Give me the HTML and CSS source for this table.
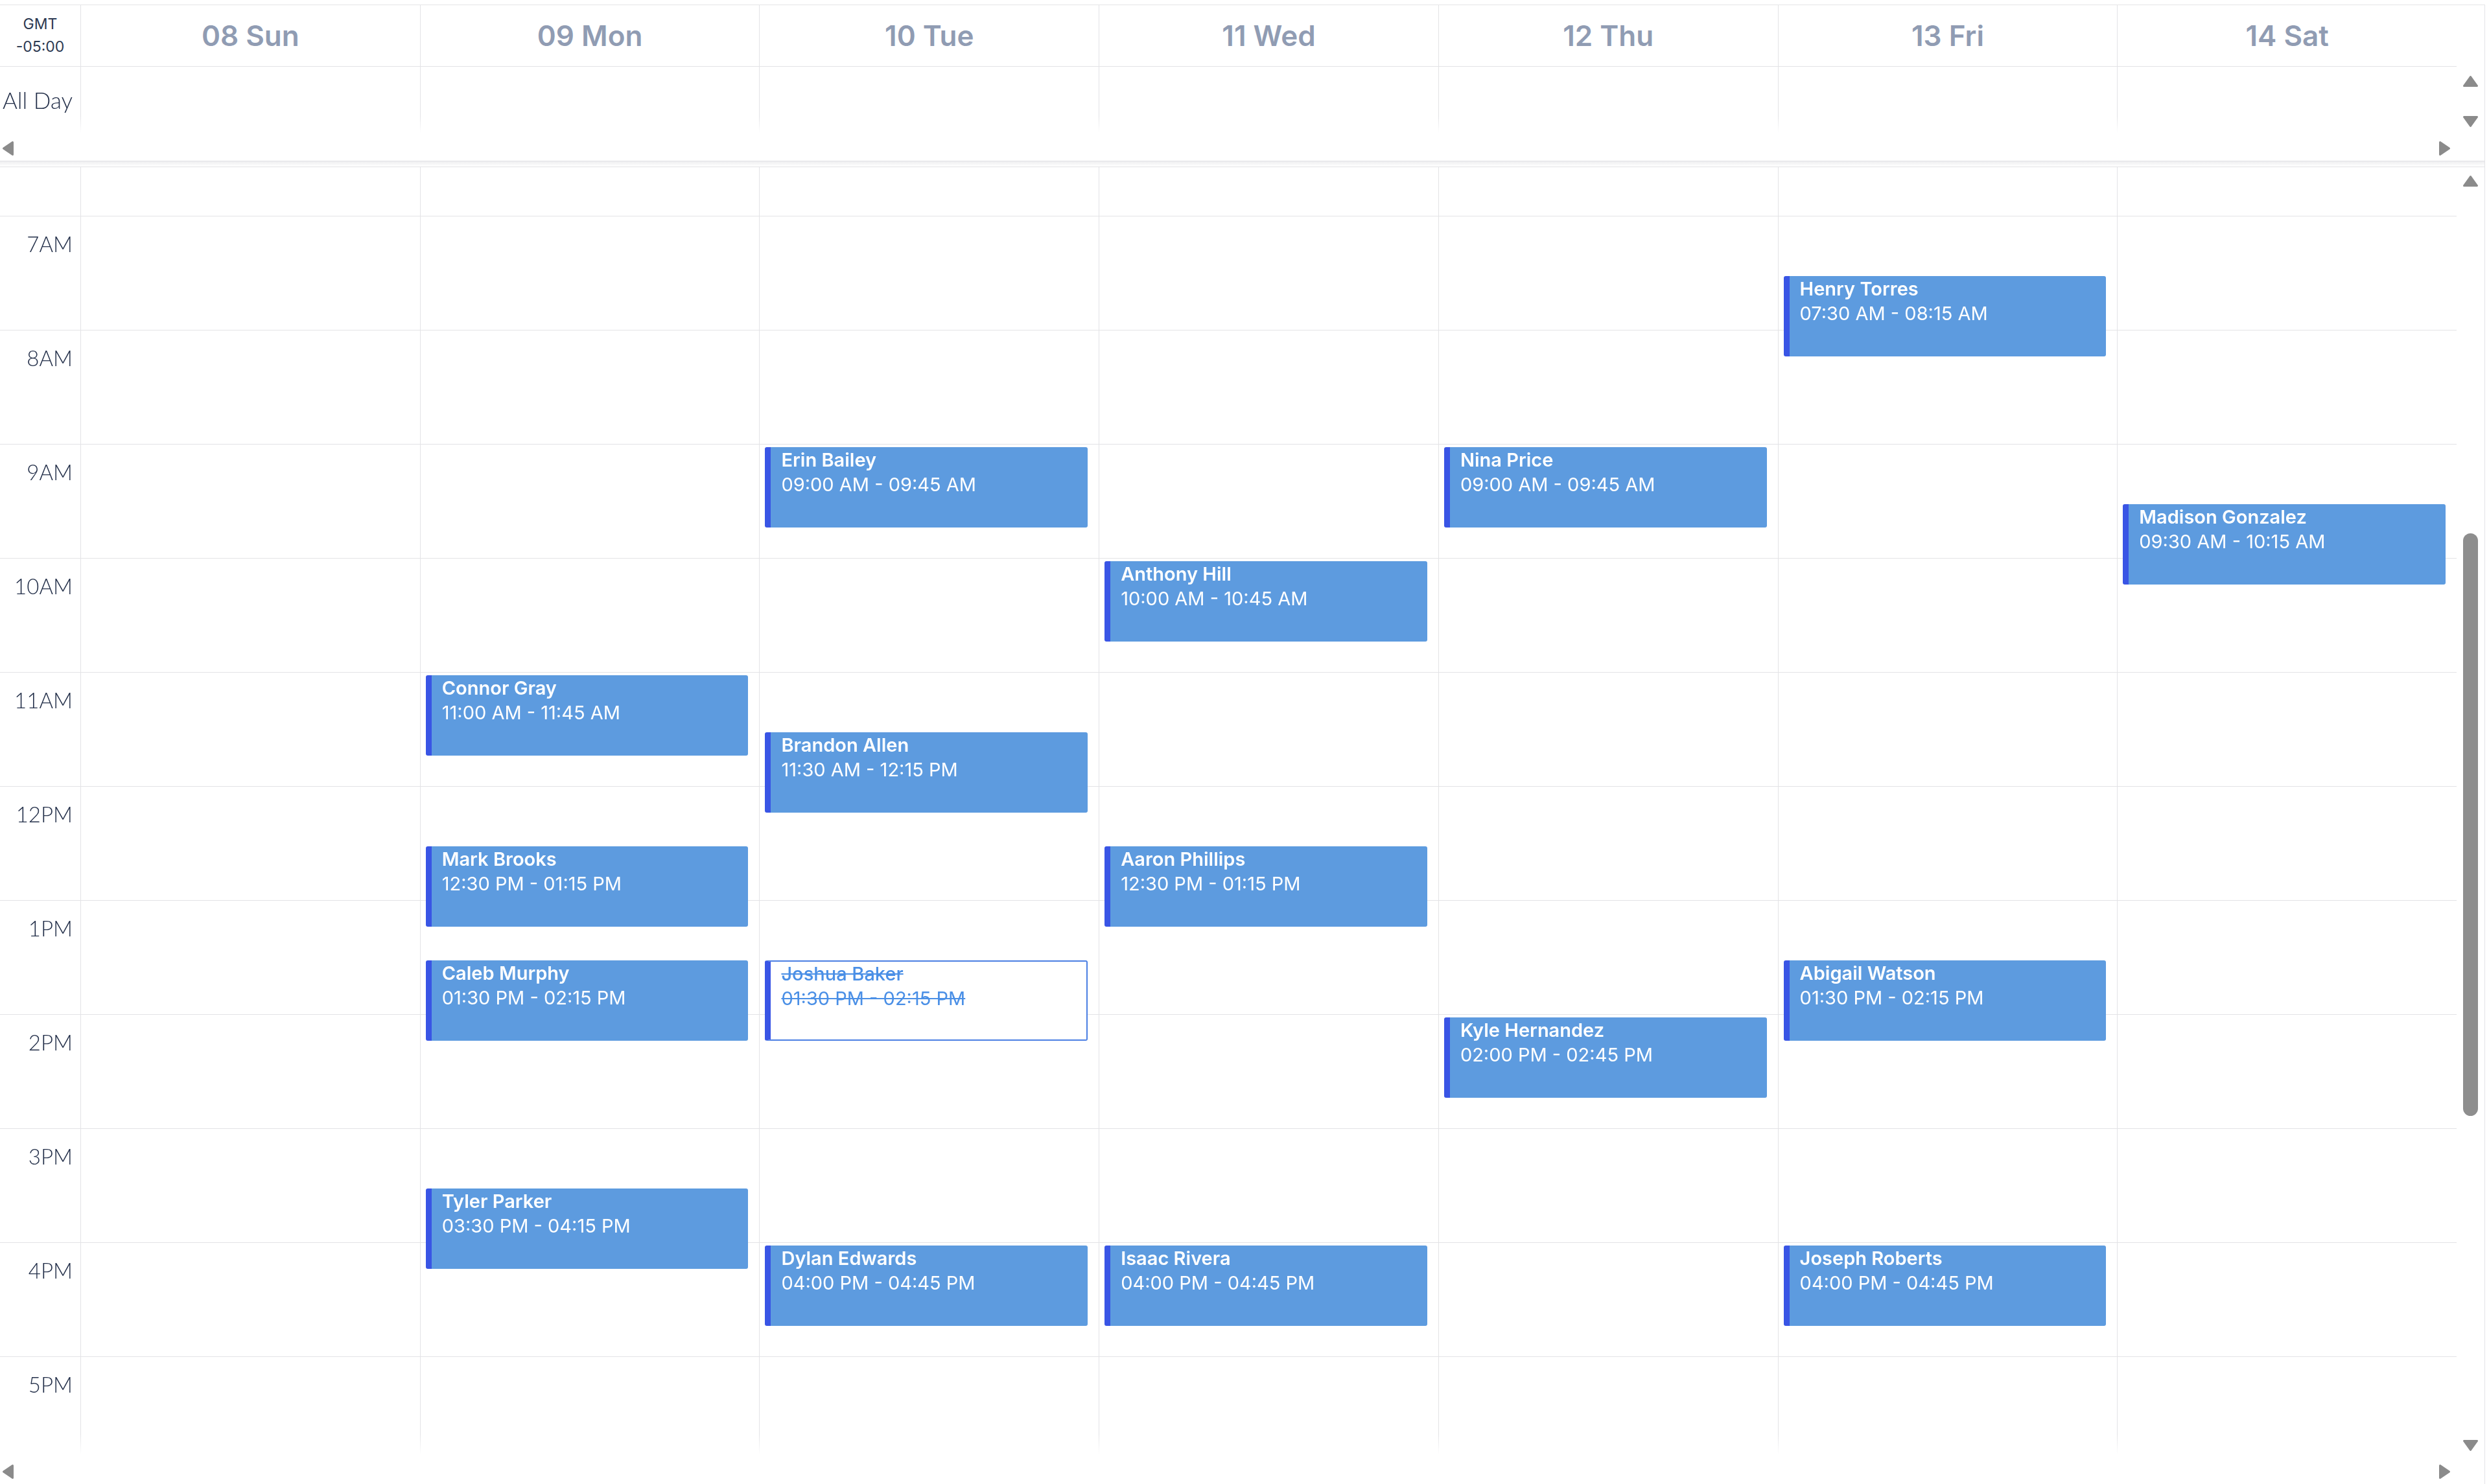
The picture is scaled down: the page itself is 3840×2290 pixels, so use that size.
FILE: index.html
```html
<!DOCTYPE html>
<html lang="en">
<head>
<meta charset="utf-8">
<title>Week Schedule</title>
<link rel="stylesheet" href="styles.css">
</head>
<body>
<div class="scheduler">
  <div class="header">
    <div class="tz"><span>GMT</span><span>-05:00</span></div>
    <div class="day-head">08 Sun</div>
    <div class="day-head">09 Mon</div>
    <div class="day-head">10 Tue</div>
    <div class="day-head">11 Wed</div>
    <div class="day-head">12 Thu</div>
    <div class="day-head">13 Fri</div>
    <div class="day-head">14 Sat</div>
    <div class="gutter"></div>
  </div>

  <div class="allday">
    <div class="allday-main">
      <div class="allday-cells">
        <div class="allday-label">All Day</div>
        <div class="allday-cell"></div>
        <div class="allday-cell"></div>
        <div class="allday-cell"></div>
        <div class="allday-cell"></div>
        <div class="allday-cell"></div>
        <div class="allday-cell"></div>
        <div class="allday-cell"></div>
      </div>
      <div class="hbar hbar-allday">
        <svg class="arr arr-h" viewBox="0 0 19 24"><path d="M2.5 12 L16.5 2.5 L16.5 21.5 Z"/></svg>
        <svg class="arr arr-h" viewBox="0 0 19 24"><path d="M16.5 12 L2.5 2.5 L2.5 21.5 Z"/></svg>
      </div>
    </div>
    <div class="vbar vbar-allday">
      <svg class="arr arr-v" viewBox="0 0 25 19"><path d="M12.5 2.5 L22.5 16.5 L2.5 16.5 Z"/></svg>
      <svg class="arr arr-v" viewBox="0 0 25 19"><path d="M12.5 16.5 L22.5 2.5 L2.5 2.5 Z"/></svg>
    </div>
  </div>

  <div class="sep"></div>

  <div class="body">
    <div class="body-left">
      <div class="viewport">
        <div class="grid">
          <div class="times">
            <div class="time"></div>
            <div class="time">7AM</div>
            <div class="time">8AM</div>
            <div class="time">9AM</div>
            <div class="time">10AM</div>
            <div class="time">11AM</div>
            <div class="time">12PM</div>
            <div class="time">1PM</div>
            <div class="time">2PM</div>
            <div class="time">3PM</div>
            <div class="time">4PM</div>
            <div class="time">5PM</div>
          </div>
          <div class="day-col"></div>
          <div class="day-col">
            <div class="event" style="top:885px"><span class="ev-name">Connor Gray</span><span class="ev-time">11:00 AM - 11:45 AM</span></div>
            <div class="event" style="top:1149px"><span class="ev-name">Mark Brooks</span><span class="ev-time">12:30 PM - 01:15 PM</span></div>
            <div class="event" style="top:1325px"><span class="ev-name">Caleb Murphy</span><span class="ev-time">01:30 PM - 02:15 PM</span></div>
            <div class="event" style="top:1677px"><span class="ev-name">Tyler Parker</span><span class="ev-time">03:30 PM - 04:15 PM</span></div>
          </div>
          <div class="day-col">
            <div class="event" style="top:533px"><span class="ev-name">Erin Bailey</span><span class="ev-time">09:00 AM - 09:45 AM</span></div>
            <div class="event" style="top:973px"><span class="ev-name">Brandon Allen</span><span class="ev-time">11:30 AM - 12:15 PM</span></div>
            <div class="event event-cancelled" style="top:1325px"><span class="ev-name">Joshua Baker</span><span class="ev-time">01:30 PM - 02:15 PM</span></div>
            <div class="event" style="top:1765px"><span class="ev-name">Dylan Edwards</span><span class="ev-time">04:00 PM - 04:45 PM</span></div>
          </div>
          <div class="day-col">
            <div class="event" style="top:709px"><span class="ev-name">Anthony Hill</span><span class="ev-time">10:00 AM - 10:45 AM</span></div>
            <div class="event" style="top:1149px"><span class="ev-name">Aaron Phillips</span><span class="ev-time">12:30 PM - 01:15 PM</span></div>
            <div class="event" style="top:1765px"><span class="ev-name">Isaac Rivera</span><span class="ev-time">04:00 PM - 04:45 PM</span></div>
          </div>
          <div class="day-col">
            <div class="event" style="top:533px"><span class="ev-name">Nina Price</span><span class="ev-time">09:00 AM - 09:45 AM</span></div>
            <div class="event" style="top:1413px"><span class="ev-name">Kyle Hernandez</span><span class="ev-time">02:00 PM - 02:45 PM</span></div>
          </div>
          <div class="day-col">
            <div class="event" style="top:269px"><span class="ev-name">Henry Torres</span><span class="ev-time">07:30 AM - 08:15 AM</span></div>
            <div class="event" style="top:1325px"><span class="ev-name">Abigail Watson</span><span class="ev-time">01:30 PM - 02:15 PM</span></div>
            <div class="event" style="top:1765px"><span class="ev-name">Joseph Roberts</span><span class="ev-time">04:00 PM - 04:45 PM</span></div>
          </div>
          <div class="day-col">
            <div class="event" style="top:621px"><span class="ev-name">Madison Gonzalez</span><span class="ev-time">09:30 AM - 10:15 AM</span></div>
          </div>
        </div>
      </div>
      <div class="hbar hbar-body">
        <svg class="arr arr-h" viewBox="0 0 19 24"><path d="M2.5 12 L16.5 2.5 L16.5 21.5 Z"/></svg>
        <svg class="arr arr-h" viewBox="0 0 19 24"><path d="M16.5 12 L2.5 2.5 L2.5 21.5 Z"/></svg>
      </div>
    </div>
    <div class="vbar vbar-body">
      <svg class="arr arr-v" viewBox="0 0 25 19"><path d="M12.5 2.5 L22.5 16.5 L2.5 16.5 Z"/></svg>
      <div class="track"><div class="thumb"></div></div>
      <svg class="arr arr-v" viewBox="0 0 25 19"><path d="M12.5 16.5 L22.5 2.5 L2.5 2.5 Z"/></svg>
    </div>
  </div>
</div>
</body>
</html>
```

FILE: styles.css
```css
* { box-sizing: border-box; }

html, body {
  margin: 0;
  padding: 0;
  background: #ffffff;
}

body {
  width: 3840px;
  height: 2290px;
  overflow: hidden;
  font-family: "Inter", "Liberation Sans", sans-serif;
}

.scheduler {
  margin-top: 7px;
  width: 3834px;
  height: 2283px;
  border-top: 1px solid #e4e4e7;
  border-right: 1px solid #e4e4e7;
  display: flex;
  flex-direction: column;
}

/* ---------- header ---------- */
.header {
  display: flex;
  flex: none;
  height: 95px;
}

.tz {
  width: 124px;
  flex: none;
  border-bottom: 1px solid #e3e3e6;
  display: flex;
  flex-direction: column;
  align-items: center;
  justify-content: center;
  font-size: 23px;
  line-height: 35px;
  color: #2d3a52;
}

.day-head {
  flex: 1;
  min-width: 0;
  border-left: 1px solid #e3e3e6;
  border-bottom: 1px solid #e3e3e6;
  display: flex;
  align-items: center;
  justify-content: center;
  font-size: 44px;
  font-weight: 600;
  color: #909cb3;
}

.gutter {
  width: 43px;
  flex: none;
}

/* ---------- all day row ---------- */
.allday {
  display: flex;
  flex: none;
  height: 146px;
  border-bottom: 1px solid #e2e2e5;
}

.allday-main {
  flex: 1;
  min-width: 0;
  display: flex;
  flex-direction: column;
}

.allday-cells {
  display: flex;
  height: 102px;
  -webkit-mask-image: linear-gradient(to bottom, #000 75%, transparent 100%);
  mask-image: linear-gradient(to bottom, #000 75%, transparent 100%);
}

.allday-label {
  width: 124px;
  flex: none;
  display: flex;
  align-items: center;
  padding-left: 4px;
  font-family: "Lato", "Inter", sans-serif;
  font-size: 35px;
  font-weight: 300;
  color: #24304a;
}

.allday-cell {
  flex: 1;
  min-width: 0;
  border-left: 1px solid #e3e3e6;
}

/* ---------- scrollbars ---------- */
.hbar {
  display: flex;
  justify-content: space-between;
  align-items: flex-start;
  padding: 0 9px 0 3px;
}

.hbar-allday {
  height: 43px;
  padding-top: 12px;
}

.hbar-body {
  height: 45px;
  flex: none;
  padding-top: 14px;
}

.arr {
  display: block;
  fill: #8b8b8b;
  stroke: #8b8b8b;
  stroke-width: 3;
  stroke-linejoin: round;
  flex: none;
}

.arr-h {
  width: 19px;
  height: 24px;
}

.arr-v {
  width: 25px;
  height: 19px;
}

.vbar {
  width: 43px;
  flex: none;
  display: flex;
  flex-direction: column;
  align-items: center;
}

.vbar-allday {
  padding-top: 13px;
  gap: 43px;
}

.vbar-body {
  padding-top: 12px;
  padding-bottom: 50px;
}

.track {
  flex: 1;
  width: 23px;
}

.thumb {
  margin-top: 534px;
  width: 23px;
  height: 899px;
  border-radius: 12px;
  background: #8e8e8e;
}

/* ---------- separator ---------- */
.sep {
  flex: none;
  height: 8px;
  background: linear-gradient(to bottom, #eeeef0, #ffffff);
}

/* ---------- body ---------- */
.body {
  flex: 1;
  min-height: 0;
  display: flex;
  border-top: 1px solid #e2e2e5;
}

.body-left {
  flex: 1;
  min-width: 0;
  display: flex;
  flex-direction: column;
}

.viewport {
  flex: 1;
  min-height: 0;
  overflow: hidden;
  -webkit-mask-image: linear-gradient(to bottom, #000 calc(100% - 32px), transparent 100%);
  mask-image: linear-gradient(to bottom, #000 calc(100% - 32px), transparent 100%);
}

.grid {
  display: flex;
  margin-top: -101px;
  height: 2288px;
  background: repeating-linear-gradient(to bottom, #e3e3e6 0, #e3e3e6 1px, transparent 1px, transparent 176px);
}

.times {
  width: 124px;
  flex: none;
}

.time {
  height: 176px;
  padding: 23px 12px 0 0;
  text-align: right;
  font-family: "Lato", "Inter", sans-serif;
  font-size: 33px;
  line-height: 40px;
  font-weight: 300;
  color: #24304a;
}

.day-col {
  flex: 1;
  min-width: 0;
  position: relative;
  border-left: 1px solid #e3e3e6;
}

/* ---------- events ---------- */
.event {
  position: absolute;
  left: 8px;
  right: 17px;
  height: 124px;
  display: flex;
  flex-direction: column;
  padding: 1px 0 0 16px;
  background: #5d9bdf;
  border-left: 9px solid #3955e5;
  border-radius: 3px;
  color: #ffffff;
  font-size: 29px;
  line-height: 38px;
  white-space: nowrap;
  overflow: hidden;
}

.ev-name {
  font-weight: 600;
}

.ev-time {
  font-weight: 400;
}

.event-cancelled {
  background: #ffffff;
  border: 2px solid #4b7fe3;
  border-left: 9px solid #3955e5;
  padding-top: 0;
  color: #4a8fe6;
  text-decoration: line-through;
}

.event-cancelled .ev-name {
  font-weight: 500;
}
```
